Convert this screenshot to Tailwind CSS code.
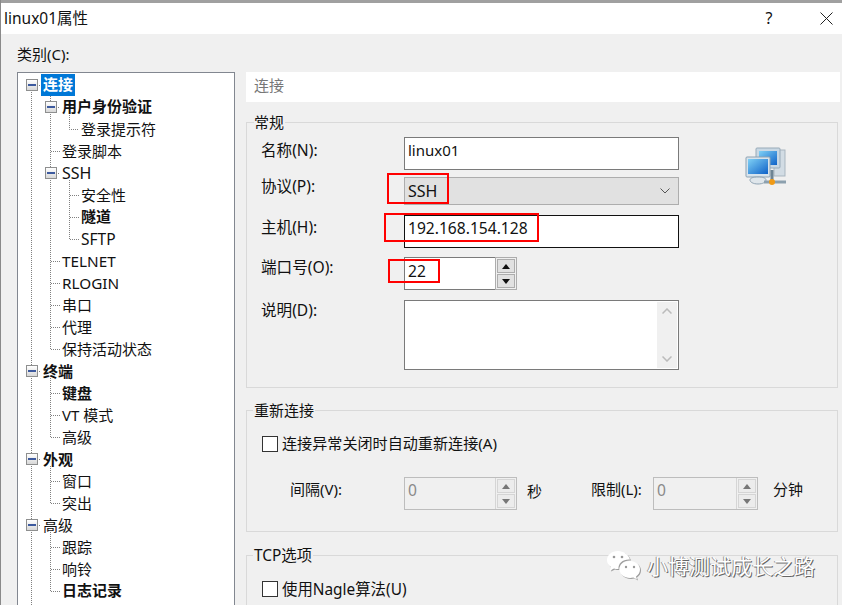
<!DOCTYPE html>
<html lang="zh"><head><meta charset="utf-8">
<script src="https://cdn.jsdelivr.net/npm/@tailwindcss/browser@4"></script>
</head>
<body class="m-0">
<div class="relative w-[842px] h-[605px] overflow-hidden bg-[#f0f0f0] border-l border-[#8a8a8a] text-[15px] leading-[22px] text-[#111] font-['Noto_Sans','Noto_Sans_CJK_SC',sans-serif]">
  <!-- title bar -->
  <div class="h-[34px] bg-white border-t-[3px] border-[#a0a0a0] flex items-center pl-[3px] pr-[9px] text-[15.5px]">
    <span class="flex-1 pb-[2px]">linux01属性</span>
    <span class="w-[20px] mr-[41px] text-center text-[16px] pb-[2px]">?</span>
    <svg class="w-[13px] h-[13px]" viewBox="0 0 13 13"><path d="M.5.5l12 12M12.5.5l-12 12" stroke="#222" stroke-width="1" fill="none"/></svg>
  </div>
  <div class="flex pl-[16px]">
    <!-- left column -->
    <div class="w-[218px] shrink-0">
      <div class="h-[38px] pt-[9px]">类别(C):</div>
      <div class="relative h-[540px] bg-white border border-[#828790] pt-[1px]">
        <svg class="absolute left-0 top-0 w-[216px] h-[532px]" viewBox="18 73 216 532" fill="none" stroke="#808080" stroke-dasharray="1 1">
          <path d="M31.5 92V605M37 85.5h4M37 371.5h4M37 459.5h4M37 525.5h4"/>
          <path d="M50.5 96V349.5M56 107.5h4M56 173.5h4M51 151.5h9M51 261.5h9M51 283.5h9M51 305.5h9M51 327.5h9M51 349.5h9"/>
          <path d="M69.5 113V129.5H79M69.5 180V239.5H79M70 195.5h9M70 217.5h9"/>
          <path d="M50.5 378V437.5M51 393.5h9M51 415.5h9M51 437.5h9"/>
          <path d="M50.5 466V503.5M51 481.5h9M51 503.5h9"/>
          <path d="M50.5 532V591.5M51 547.5h9M51 569.5h9M51 591.5h9"/>
        </svg>
        <div class="relative flex flex-col">
          <div class="h-[22px] flex items-center pl-[8px]"><span class="w-3 h-3 mr-[3px] flex items-center justify-center border border-[#8e8f8f] bg-gradient-to-b from-white to-[#d8d8d8]"><span class="w-[8px] h-[2px] bg-[#3d5a9e]"></span></span><span class="px-[2px] leading-[20px] pb-[2px] bg-[#0078d7] text-white font-bold">连接</span></div>
          <div class="h-[22px] flex items-center pl-[27px]"><span class="w-3 h-3 mr-[3px] flex items-center justify-center border border-[#8e8f8f] bg-gradient-to-b from-white to-[#d8d8d8]"><span class="w-[8px] h-[2px] bg-[#3d5a9e]"></span></span><span class="px-[2px] leading-[20px] pb-[2px] font-bold">用户身份验证</span></div>
          <div class="h-[22px] flex items-center pl-[61px]"><span class="px-[2px]">登录提示符</span></div>
          <div class="h-[22px] flex items-center pl-[42px]"><span class="px-[2px]">登录脚本</span></div>
          <div class="h-[22px] flex items-center pl-[27px]"><span class="w-3 h-3 mr-[3px] flex items-center justify-center border border-[#8e8f8f] bg-gradient-to-b from-white to-[#d8d8d8]"><span class="w-[8px] h-[2px] bg-[#3d5a9e]"></span></span><span class="px-[2px] text-[16px]">SSH</span></div>
          <div class="h-[22px] flex items-center pl-[61px]"><span class="px-[2px]">安全性</span></div>
          <div class="h-[22px] flex items-center pl-[61px]"><span class="px-[2px] leading-[20px] pb-[2px] font-bold">隧道</span></div>
          <div class="h-[22px] flex items-center pl-[61px]"><span class="px-[2px] text-[15.5px]">SFTP</span></div>
          <div class="h-[22px] flex items-center pl-[42px]"><span class="px-[2px] text-[15.3px]">TELNET</span></div>
          <div class="h-[22px] flex items-center pl-[42px]"><span class="px-[2px] text-[15.3px]">RLOGIN</span></div>
          <div class="h-[22px] flex items-center pl-[42px]"><span class="px-[2px]">串口</span></div>
          <div class="h-[22px] flex items-center pl-[42px]"><span class="px-[2px]">代理</span></div>
          <div class="h-[22px] flex items-center pl-[42px]"><span class="px-[2px]">保持活动状态</span></div>
          <div class="h-[22px] flex items-center pl-[8px]"><span class="w-3 h-3 mr-[3px] flex items-center justify-center border border-[#8e8f8f] bg-gradient-to-b from-white to-[#d8d8d8]"><span class="w-[8px] h-[2px] bg-[#3d5a9e]"></span></span><span class="px-[2px] font-bold">终端</span></div>
          <div class="h-[22px] flex items-center pl-[42px]"><span class="px-[2px] font-bold">键盘</span></div>
          <div class="h-[22px] flex items-center pl-[42px]"><span class="px-[2px]">VT 模式</span></div>
          <div class="h-[22px] flex items-center pl-[42px]"><span class="px-[2px]">高级</span></div>
          <div class="h-[22px] flex items-center pl-[8px]"><span class="w-3 h-3 mr-[3px] flex items-center justify-center border border-[#8e8f8f] bg-gradient-to-b from-white to-[#d8d8d8]"><span class="w-[8px] h-[2px] bg-[#3d5a9e]"></span></span><span class="px-[2px] font-bold">外观</span></div>
          <div class="h-[22px] flex items-center pl-[42px]"><span class="px-[2px]">窗口</span></div>
          <div class="h-[22px] flex items-center pl-[42px]"><span class="px-[2px]">突出</span></div>
          <div class="h-[22px] flex items-center pl-[8px]"><span class="w-3 h-3 mr-[3px] flex items-center justify-center border border-[#8e8f8f] bg-gradient-to-b from-white to-[#d8d8d8]"><span class="w-[8px] h-[2px] bg-[#3d5a9e]"></span></span><span class="px-[2px]">高级</span></div>
          <div class="h-[22px] flex items-center pl-[42px]"><span class="px-[2px]">跟踪</span></div>
          <div class="h-[22px] flex items-center pl-[42px]"><span class="px-[2px]">响铃</span></div>
          <div class="h-[22px] flex items-center pl-[42px]"><span class="px-[2px] leading-[20px] pb-[2px] font-bold">日志记录</span></div>
        </div>
      </div>
    </div>
    <!-- right column -->
    <div class="ml-[11px] w-[594px] shrink-0 pt-[38px]">
      <div class="h-[30px] bg-white pl-[8px] pb-[4px] flex items-center text-[#777]">连接</div>

      <!-- general -->
      <div class="relative mt-[20px] w-[592px] h-[266px] border border-[#d9d9d9] pl-[157px] pt-[14px]">
        <span class="absolute left-[7px] -top-[12px] bg-[#f0f0f0] pr-[1px]">常规</span>
        <svg class="absolute left-[497px] top-[23px] w-[44px] h-[42px]" viewBox="0 0 44 42">
          <defs><linearGradient id="s" x1="0" y1="0" x2="1" y2="1"><stop offset="0" stop-color="#7fd0f5"/><stop offset="1" stop-color="#0f62c8"/></linearGradient></defs>
          <rect x="30" y="4" width="11" height="26" fill="#d2dce4" stroke="#a9b6c0"/>
          <rect x="12" y="2" width="24" height="20" rx="1" fill="#c9d8e4" stroke="#98aab8"/>
          <rect x="15" y="5" width="18" height="14" fill="url(#s)"/>
          <rect x="2" y="11" width="24" height="20" rx="1" fill="#d7e3ec" stroke="#8fa3b3"/>
          <rect x="4" y="13" width="20" height="15" fill="url(#s)"/>
          <path d="M6 34c0-2 3-3 8-3s8 1 8 3-3 4-8 4-8-2-8-4z" fill="#dfe6eb" stroke="#8fa3b3"/>
          <path d="M20 36h22" stroke="#8ca0ae" stroke-width="3"/>
          <path d="M28 24v12" stroke="#6d8494" stroke-width="3"/>
          <circle cx="28" cy="36" r="3" fill="#f09a16"/>
        </svg>
        <div class="relative flex flex-col items-start">
          <div class="relative flex h-[33px]"><span class="absolute -left-[143px] top-[2px] whitespace-nowrap text-[15.6px]">名称(N):</span><div class="w-[275px] h-[33px] bg-white border border-[#7a7a7a] pl-[3px] pt-[1px]">linux01</div></div>
          <div class="relative mt-[7px] flex h-[28px]"><span class="absolute -left-[143px] -top-[2px] whitespace-nowrap text-[15.6px]">协议(P):</span><div class="w-[275px] h-[28px] bg-[#e1e1e1] border border-[#adadad] pl-[3px] pr-[8px] flex items-center justify-between"><span class="text-[16px]">SSH</span><svg class="w-[10px] h-[6px]" viewBox="0 0 10 6"><path d="M.5.5L5 5 9.5.5" fill="none" stroke="#555"/></svg></div></div>
          <div class="relative mt-[10px] flex h-[33px]"><span class="absolute -left-[143px] top-[1px] whitespace-nowrap text-[15.6px]">主机(H):</span><div class="w-[275px] h-[33px] bg-white border border-[#111] pl-[3px] pt-[1px] text-[15.6px]">192.168.154.128</div></div>
          <div class="relative mt-[9px] flex h-[33px]"><span class="absolute -left-[143px] -top-[1px] whitespace-nowrap text-[15.6px]">端口号(O):</span><div class="w-[91px] h-[33px] bg-white border-y border-l border-[#7a7a7a] pl-[3px] pt-[2px] text-[15.6px]">22</div>
            <div class="w-[22px] h-[33px] border border-[#adadad] bg-[#f0f0f0] p-[1px] flex flex-col gap-[1px]">
              <span class="flex-1 bg-[#e1e1e1] border border-[#adadad] flex items-center justify-center"><svg class="w-[8px] h-[5px]" viewBox="0 0 8 5"><path d="M4 0l4 5H0z" fill="#111"/></svg></span>
              <span class="flex-1 bg-[#e1e1e1] border border-[#adadad] flex items-center justify-center"><svg class="w-[8px] h-[5px]" viewBox="0 0 8 5"><path d="M0 0h8L4 5z" fill="#111"/></svg></span>
            </div>
          </div>
          <div class="relative mt-[10px] h-[70px] flex"><span class="absolute -left-[143px] -top-[1px] whitespace-nowrap text-[15.6px]">说明(D):</span><div class="w-[275px] h-[70px] bg-white border border-[#7a7a7a] flex justify-end p-[1px]">
            <div class="w-[20px] bg-[#f0f0f0] flex flex-col justify-between items-center py-[6px]"><svg class="w-[10px] h-[6px]" viewBox="0 0 10 6"><path d="M.5 5.500L5 1l4.500 4.500" fill="none" stroke="#bbb" stroke-width="1.500"/></svg><svg class="w-[10px] h-[6px]" viewBox="0 0 10 6"><path d="M.5.5L5 5l4.500-4.500" fill="none" stroke="#bbb" stroke-width="1.500"/></svg></div>
          </div></div>
        </div>
        <!-- red annotations -->
        <div class="absolute left-[140px] top-[50px] w-[62px] h-[31px] border-2 border-[#f00]"></div>
        <div class="absolute left-[137px] top-[90px] w-[155px] h-[29px] border-2 border-[#f00]"></div>
        <div class="absolute left-[141px] top-[136px] w-[52px] h-[24px] border-2 border-[#f00]"></div>
      </div>

      <!-- reconnect -->
      <div class="relative mt-[22px] w-[592px] h-[122px] border border-[#d9d9d9] pl-[15px] pt-[25px]">
        <span class="absolute left-[6px] -top-[12px] bg-[#f0f0f0] px-[1px]">重新连接</span>
        <div class="flex items-center h-[16px]"><span class="w-[16px] h-[16px] bg-white border border-[#333] mr-[4px]"></span><span class="pb-[2px] text-[15.100px]">连接异常关闭时自动重新连接(A)</span></div>
        <div class="flex items-start mt-[25px] h-[33px]">
          <span class="ml-[28px] w-[114px] pt-[1px]">间隔(V):</span>
          <div class="w-[113px] h-[33px] flex border border-[#bdbdbd] bg-[#f0f0f0]"><span class="flex-1 pl-[3px] pt-[1px] text-[#8a8a8a] text-[15.6px]">0</span>
            <div class="w-[21px] border-l border-[#d5d5d5] p-[1px] flex flex-col gap-[1px]">
              <span class="flex-1 bg-[#ececec] border border-[#d5d5d5] flex items-center justify-center"><svg class="w-[8px] h-[5px]" viewBox="0 0 8 5"><path d="M4 0l4 5H0z" fill="#777"/></svg></span>
              <span class="flex-1 bg-[#ececec] border border-[#d5d5d5] flex items-center justify-center"><svg class="w-[8px] h-[5px]" viewBox="0 0 8 5"><path d="M0 0h8L4 5z" fill="#777"/></svg></span>
            </div></div>
          <span class="ml-[10px] w-[64px] pt-[3px]">秒</span>
          <span class="w-[62px] pt-[1px]">限制(L):</span>
          <div class="w-[105px] h-[33px] flex border border-[#bdbdbd] bg-[#f0f0f0]"><span class="flex-1 pl-[3px] pt-[1px] text-[#8a8a8a] text-[15.6px]">0</span>
            <div class="w-[21px] border-l border-[#d5d5d5] p-[1px] flex flex-col gap-[1px]">
              <span class="flex-1 bg-[#ececec] border border-[#d5d5d5] flex items-center justify-center"><svg class="w-[8px] h-[5px]" viewBox="0 0 8 5"><path d="M4 0l4 5H0z" fill="#777"/></svg></span>
              <span class="flex-1 bg-[#ececec] border border-[#d5d5d5] flex items-center justify-center"><svg class="w-[8px] h-[5px]" viewBox="0 0 8 5"><path d="M0 0h8L4 5z" fill="#777"/></svg></span>
            </div></div>
          <span class="ml-[15px] pt-[1px]">分钟</span>
        </div>
      </div>

      <!-- tcp -->
      <div class="relative mt-[23px] w-[592px] h-[80px] border border-[#d9d9d9] pl-[15px] pt-[25px]">
        <span class="absolute left-[6px] -top-[11px] bg-[#f0f0f0] px-[1px] text-[15.4px]">TCP选项</span>
        <div class="flex items-center h-[16px]"><span class="w-[16px] h-[16px] bg-white border border-[#333] mr-[4px]"></span><span class="pt-[1px] text-[15.4px]">使用Nagle算法(U)</span></div>
      </div>
    </div>
  </div>

  <!-- watermark -->
  <div class="absolute left-[605px] top-[550px] flex items-center">
    <svg class="w-[36px] h-[32px]" viewBox="0 0 36 32" style="filter:drop-shadow(1px 1px 0 rgba(90,90,90,.55))">
      <path d="M12 1C5.500 1 1 5 1 10c0 3 1.500 5.500 4 7l-1 3.500 4-2c1.500.400 3 .600 4.500.500C12 13 17 9 24 9.500 22.500 4.500 17.500 1 12 1z" fill="#fff"/>
      <path d="M24 11c-6 0-10.500 3.700-10.500 8.500S18 28 24 28c1.200 0 2.300-.200 3.300-.500l3.700 2-1-3c2.500-1.700 4-4 4-7C34 14.700 30 11 24 11z" fill="#fff"/>
      <circle cx="8" cy="7" r="1.300" fill="#999"/><circle cx="16" cy="7" r="1.300" fill="#999"/>
      <circle cx="20" cy="17" r="1.200" fill="#999"/><circle cx="28" cy="17" r="1.200" fill="#999"/>
    </svg>
    <span class="ml-[5px] text-[21px] leading-[28px] text-white [text-shadow:1px_1px_0_#666,-1px_0_0_#999]">小博测试成长之路</span>
  </div>
</div>
</body></html>
